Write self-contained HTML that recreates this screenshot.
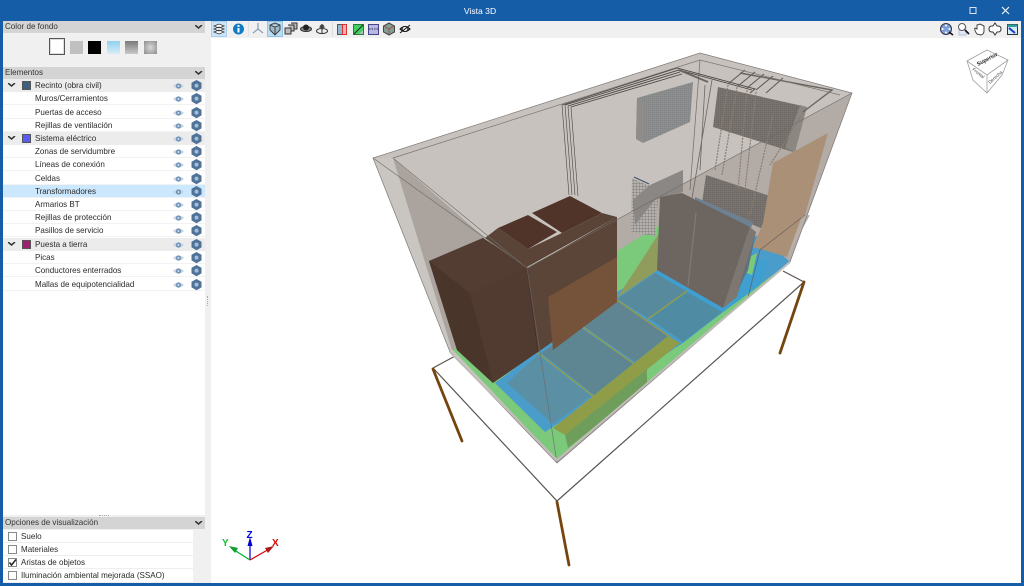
<!DOCTYPE html>
<html><head><meta charset="utf-8"><style>
html,body{margin:0;padding:0;width:1024px;height:586px;overflow:hidden;background:#165da8;font-family:"Liberation Sans",sans-serif;font-size:8.05px;color:#2a2a2a}
#w{position:absolute;left:0;top:0;width:1024px;height:586px;background:#165da8;filter:blur(.3px)}
.a{position:absolute}
.h{position:absolute;left:3px;width:202px;height:12px;background:#d4d4d4;line-height:11px;text-indent:2px;color:#333}
.h svg{position:absolute;right:2px;top:4px}
.r{position:absolute;left:3px;width:202px;height:13px;background:#fff;border-bottom:1px solid #f2f2f2;line-height:13px;box-sizing:border-box;text-indent:32px;white-space:nowrap}
.g{background:#ececec;border-bottom:0}
.sel{background:#cce8ff}
.r svg.e{position:absolute;left:170px;top:3px}
.r svg.x{position:absolute;left:187.500px;top:.5px}
.r svg.c{position:absolute;left:5px;top:4px}
.r i{position:absolute;left:19px;top:2px;width:9px;height:9px;border:.5px solid #555;box-sizing:border-box}
.o{position:absolute;left:3px;width:190px;height:13px;background:#fff;border-bottom:1px solid #eee;box-sizing:border-box;line-height:13px;text-indent:18px;white-space:nowrap}
.o b{position:absolute;left:5px;top:2px;width:7px;height:7px;border:1px solid #888;background:#fff}
.s{position:absolute;top:41px;width:13px;height:13px}
</style></head><body><div id="w">
<svg width="0" height="0" style="position:absolute"><defs>
<g id="eye"><path d="M0 4Q5.500 -1 11 4Q5.500 9 0 4Z" fill="#c3d3e5"/><circle cx="5.500" cy="4" r="2.600" fill="#7394b8"/><circle cx="5.500" cy="4" r="1" fill="#cfdeec"/></g>
<g id="gear"><path d="M5.500 0L10.500 2.800V8.400L5.500 11.200L.5 8.400V2.800Z" fill="#4f7298"/><circle cx="5.500" cy="5.600" r="2" fill="#a6bdd4"/></g>
<g id="chev"><path d="M0 0L3.500 3L7 0" fill="none" stroke="#333" stroke-width="1.500"/></g>
<pattern id="m" width="2" height="2" patternUnits="userSpaceOnUse"><rect width="2" height="2" fill="#8d8e8e"/><rect width="1" height="1" fill="#808182"/></pattern>
<pattern id="m2" width="2" height="2" patternUnits="userSpaceOnUse"><rect width="2" height="2" fill="#78736f"/><rect width="1" height="1" fill="#6c6763"/></pattern>
<pattern id="m3" width="3" height="3" patternUnits="userSpaceOnUse"><rect width="3" height="3" fill="#b5b1ad"/><path d="M0 0H3M0 0V3" stroke="#6f6c6a" stroke-width=".7"/></pattern>
</defs></svg>

<div class="a" style="left:0;top:0;width:1024px;height:20px;background:#165da8;color:#fff;text-align:center;line-height:22px;font-size:8.600px;text-indent:-64px">Vista 3D</div>
<svg class="a" style="left:960px;top:4px" width="60" height="14"><rect x="10" y="3.500" width="6" height="6" fill="none" stroke="#dbe6f2"/><path d="M42 3L49 10M49 3L42 10" stroke="#eef3f9" stroke-width="1.200"/></svg>

<div class="a" style="left:3px;top:21px;width:208px;height:562px;background:#f0f0f0"></div>
<div class="h" style="top:21px">Color de fondo<svg width="8" height="5"><use href="#chev"/></svg></div>
<div class="s" style="left:49px;top:38px;width:14px;height:15px;background:#fff;border:1.500px solid #555;outline:1px solid #ddd;outline-offset:-2px"></div>
<div class="s" style="left:70px;background:#c0c0c0"></div>
<div class="s" style="left:88px;background:#000"></div>
<div class="s" style="left:107px;background:linear-gradient(#8fd0ef,#d9ecf6)"></div>
<div class="s" style="left:125px;background:linear-gradient(#7a7a7a,#c8c8c8)"></div>
<div class="s" style="left:144px;background:radial-gradient(#d8d8d8,#8c8c8c)"></div>

<div class="h" style="top:67px">Elementos<svg width="8" height="5"><use href="#chev"/></svg></div>
<div class="a" style="left:3px;top:79px;width:202px;height:436px;background:#fff"></div>

<div class="r g" style="top:79px"><svg class="c" width="8" height="5"><use href="#chev"/></svg><i style="background:#3f5f7f"></i>Recinto (obra civil)<svg class="e" width="11" height="8"><use href="#eye"/></svg><svg class="x" width="11" height="12"><use href="#gear"/></svg></div>
<div class="r" style="top:92px">Muros/Cerramientos<svg class="e" width="11" height="8"><use href="#eye"/></svg><svg class="x" width="11" height="12"><use href="#gear"/></svg></div>
<div class="r" style="top:106px">Puertas de acceso<svg class="e" width="11" height="8"><use href="#eye"/></svg><svg class="x" width="11" height="12"><use href="#gear"/></svg></div>
<div class="r" style="top:119px">Rejillas de ventilación<svg class="e" width="11" height="8"><use href="#eye"/></svg><svg class="x" width="11" height="12"><use href="#gear"/></svg></div>
<div class="r g" style="top:132px"><svg class="c" width="8" height="5"><use href="#chev"/></svg><i style="background:#5a5af5"></i>Sistema eléctrico<svg class="e" width="11" height="8"><use href="#eye"/></svg><svg class="x" width="11" height="12"><use href="#gear"/></svg></div>
<div class="r" style="top:145px">Zonas de servidumbre<svg class="e" width="11" height="8"><use href="#eye"/></svg><svg class="x" width="11" height="12"><use href="#gear"/></svg></div>
<div class="r" style="top:158px">Líneas de conexión<svg class="e" width="11" height="8"><use href="#eye"/></svg><svg class="x" width="11" height="12"><use href="#gear"/></svg></div>
<div class="r" style="top:172px">Celdas<svg class="e" width="11" height="8"><use href="#eye"/></svg><svg class="x" width="11" height="12"><use href="#gear"/></svg></div>
<div class="r sel" style="top:185px">Transformadores<svg class="e" width="11" height="8"><use href="#eye"/></svg><svg class="x" width="11" height="12"><use href="#gear"/></svg></div>
<div class="r" style="top:198px">Armarios BT<svg class="e" width="11" height="8"><use href="#eye"/></svg><svg class="x" width="11" height="12"><use href="#gear"/></svg></div>
<div class="r" style="top:211px">Rejillas de protección<svg class="e" width="11" height="8"><use href="#eye"/></svg><svg class="x" width="11" height="12"><use href="#gear"/></svg></div>
<div class="r" style="top:224px">Pasillos de servicio<svg class="e" width="11" height="8"><use href="#eye"/></svg><svg class="x" width="11" height="12"><use href="#gear"/></svg></div>
<div class="r g" style="top:238px"><svg class="c" width="8" height="5"><use href="#chev"/></svg><i style="background:#a0206e"></i>Puesta a tierra<svg class="e" width="11" height="8"><use href="#eye"/></svg><svg class="x" width="11" height="12"><use href="#gear"/></svg></div>
<div class="r" style="top:251px">Picas<svg class="e" width="11" height="8"><use href="#eye"/></svg><svg class="x" width="11" height="12"><use href="#gear"/></svg></div>
<div class="r" style="top:264px">Conductores enterrados<svg class="e" width="11" height="8"><use href="#eye"/></svg><svg class="x" width="11" height="12"><use href="#gear"/></svg></div>
<div class="r" style="top:278px">Mallas de equipotencialidad<svg class="e" width="11" height="8"><use href="#eye"/></svg><svg class="x" width="11" height="12"><use href="#gear"/></svg></div>

<div class="a" style="left:99px;top:515px;width:10px;height:1px;border-top:1px dotted #aaa"></div>
<div class="a" style="left:207px;top:296px;width:1px;height:10px;border-left:1px dotted #aaa"></div>

<div class="h" style="top:517px">Opciones de visualización<svg width="8" height="5"><use href="#chev"/></svg></div>
<div class="o" style="top:530px"><b></b>Suelo</div>
<div class="o" style="top:543px"><b></b>Materiales</div>
<div class="o" style="top:556px"><b></b>Aristas de objetos<svg class="a" style="left:5px;top:2px" width="10" height="10"><path d="M1.500 4.500L3.500 7L8 1.500" fill="none" stroke="#222" stroke-width="1.500"/></svg></div>
<div class="o" style="top:569px;height:14px"><b></b>Iluminación ambiental mejorada (SSAO)</div>

<div class="a" style="left:211px;top:21px;width:810px;height:17px;background:#f0f0f0"></div>
<div class="a" style="left:211px;top:38px;width:810px;height:545px;background:#fff"></div>

<svg class="a" style="left:211px;top:21px" width="810" height="17">
<rect x=".5" y=".5" width="15" height="15" fill="#cce4f7" stroke="#a8d0ec"/>
<path d="M3 5L8 3L13 5L8 7ZM3 8L8 6L13 8L8 10ZM3 11L8 9L13 11L8 13Z" fill="#fff" stroke="#333" stroke-width=".8"/>
<circle cx="27.500" cy="8" r="5.500" fill="#0f7bc4"/><rect x="26.500" y="7" width="2" height="4.500" fill="#fff"/><rect x="26.500" y="4" width="2" height="2" fill="#fff"/>
<rect x="37" y="1" width="1" height="14" fill="#e2e2e2"/>
<path d="M47 8V2M47 8L42 12M47 8L52 12" stroke="#6f8daa" fill="none"/>
<rect x="56.500" y=".5" width="15" height="15" fill="#bcdcf2" stroke="#92c4e6"/>
<path d="M59 4L64 2L69 4V9L64 14L59 9ZM59 4L64 6L69 4M64 6V14" fill="#9fb8c8" stroke="#333" stroke-width=".9"/>
<path d="M74 7H80V13H74ZM77 4H83V10H80M80 2H86V8H83" fill="#bbb" stroke="#333"/>
<ellipse cx="95" cy="8" rx="5.500" ry="2.500" fill="#888" stroke="#333"/><circle cx="95" cy="6.500" r="3" fill="#222"/>
<ellipse cx="111" cy="10" rx="5.500" ry="2.500" fill="none" stroke="#333"/><circle cx="111" cy="6" r="2.500" fill="#555"/><path d="M111 3V13" stroke="#333"/>
<rect x="121" y="1" width="1" height="14" fill="#dcdcdc"/>
<rect x="126.500" y="3.500" width="5" height="10" fill="#8fb8d0" stroke="#555"/><rect x="131.500" y="3.500" width="4" height="10" fill="#f3b0b0" stroke="#e03030"/>
<rect x="142.500" y="3.500" width="10" height="10" fill="#40d060" stroke="#2a7a40"/><path d="M143 13L152 4" stroke="#222"/><path d="M148 13L152 9V13Z" fill="#bbb"/>
<rect x="157.500" y="3.500" width="10" height="10" fill="#b8b8e8" stroke="#444488"/><path d="M158 8H167" stroke="#333" stroke-dasharray="1.500 1"/>
<path d="M178 2L183.500 5V11L178 14L172.500 11V5Z" fill="#7fa090" stroke="#444"/><path d="M173 5L178 8L183 5M178 8V14" stroke="#a05050" fill="none"/>
<path d="M189 8Q194 3 199 8Q194 13 189 8Z" fill="#555" stroke="#111"/><circle cx="194" cy="8" r="2" fill="#fff"/><path d="M189 12L199 4" stroke="#111"/>
<circle cx="735" cy="8" r="5.500" fill="#7f9fd8" stroke="#334"/><circle cx="735" cy="4.500" r="1" fill="#fff"/><circle cx="735" cy="11.500" r="1" fill="#fff"/><circle cx="731.500" cy="8" r="1" fill="#fff"/><circle cx="738.500" cy="8" r="1" fill="#fff"/><path d="M738 11L742 14" stroke="#111" stroke-width="1.600"/>
<rect x="748" y="6" width="7" height="8" fill="#e4e8f6" stroke="#b8c0e0"/><circle cx="751" cy="6" r="3.500" fill="#fff" stroke="#555"/><path d="M754 9L758 13" stroke="#111" stroke-width="1.600"/>
<path d="M766 13Q763 9 764 7L766 8V4L768 3.500L769 3L771 4L773 5V10Q773 13 770 14Z" fill="#fff" stroke="#444"/>
<path d="M784 2L786 5H787Q790 5 790 8Q790 11 787 11H786L784 14L782 11H781Q778 11 778 8Q778 5 781 5H782Z" fill="#fff" stroke="#333"/>
<rect x="796.500" y="3.500" width="10" height="10" fill="#d8ecf8" stroke="#333"/><rect x="796.500" y="3.500" width="10" height="2.500" fill="#30a0a0"/><path d="M798 7L804 12" stroke="#1540c0" stroke-width="2"/>
</svg>

<svg class="a" style="left:0;top:0;filter:blur(.25px)" width="1024" height="586">
<!-- stand -->
<path d="M433 368L557 501L804 282L783 271M433 368L457 355" fill="none" stroke="#5a5450" stroke-width="1.200"/>
<path d="M433 369L462 441M557 502L569 565M804 282L780 353" stroke="#74450f" stroke-width="2.800" stroke-linecap="round"/>

<!-- box body -->
<path d="M373 158L700 53L852 93L790 262L557 463L450 352Z" fill="#c7c2be"/>
<path d="M527 268L852 93L790 262L557 463Z" fill="#a39b96" fill-opacity=".6"/>
<path d="M373 158L393 158L527 268L557 463L450 352Z" fill="#c9c5c1"/>
<path d="M393 158L485 238L429 261L457 350L452 350Z" fill="#aaa39e"/>

<!-- floor -->
<path d="M453 350L660 225L790 262L557 460Z" fill="#7bc97a"/>
<path d="M495 383L545 432L683 343L723 312L790 262L760 235L650 272L617 292Z" fill="#4a9ccb"/>
<path d="M684 340L723 312L760 285L768 262L720 250L655 273Z" fill="#3f9fd0"/>
<path d="M507 383L538 355L591 396L553 424Z" fill="#5b8fa3"/>
<path d="M541 353L580 327L633 364L594 395Z" fill="#5e8592"/>
<path d="M582 325L617 300L668 336L635 362Z" fill="#5f8592"/>
<path d="M617 299L655 273L686 291L648 318Z" fill="#578a9c"/>
<path d="M650 319L687 292L722 312L683 342Z" fill="#4f8ca3"/>
<path d="M538 353L593 396M580 325L634 364M617 300L670 337M648 319L687 291" stroke="#8e9a50" stroke-width="1.600" fill="none"/>
<path d="M553 428L565 435L680 343L668 336Z" fill="#8f9c48"/>
<path d="M617 298L660 232L700 240L655 272Z" fill="#8f9c5c"/>
<path d="M565 435L647 369L647 385L568 448Z" fill="#6f9d5c"/>
<path d="M730 267L757 253L752 275Z" fill="#7bc97a"/>

<!-- brown boxes -->
<path d="M429 261L483 238L527 266L538 352L493 383L457 350Z" fill="#513b30"/>
<path d="M429 261L470 293L493 383L457 350Z" fill="#4a352a"/>
<path d="M429 261L483 238L527 267L470 293Z" fill="#533d32"/>
<path d="M483 238L528 268L617 217V297L538 352L527 268Z" fill="#5b4538"/>
<path d="M485 238L498 228L528 249L562 233L602 213L617 217L527 267Z" fill="#5a4438"/>
<path d="M498 228L528 215L557 232L528 249Z" fill="#50342a"/>
<path d="M532 213L570 196L602 213L562 233Z" fill="#50342a"/>
<path d="M548 297L617 257V302L553 350Z" fill="#75533b"/>
<path d="M527 268L538 352" stroke="#3f3029" stroke-width=".8" fill="none"/>

<!-- grids -->
<path d="M637 98L693 82L690 122L643 143L636 139Z" fill="url(#m)"/>
<path d="M637 98L644 102L643 143L636 139Z" fill="#8f8c89"/>
<path d="M632 178L650 186L658 197L655 236L631 232Z" fill="url(#m3)"/>
<path d="M633 200L650 185L683 170L683 192L655 200L635 225Z" fill="#8a8785"/>
<path d="M634 177L649 184" stroke="#40536a" stroke-width="1.200"/>
<path d="M718 87L807 107L793 152L713 127Z" fill="url(#m2)"/>
<path d="M807 107L795 152L785 148L800 105Z" fill="#8d8782"/>
<path d="M706 175L782 200L777 235L702 203Z" fill="url(#m2)"/>
<path d="M762 223L782 200L776 235Z" fill="#856c56"/>
<path d="M828 133L773 163L763 223L753 247L787 257L805 215Z" fill="#ab9078"/>
<path d="M802 216L787 257L810 215Z" fill="#b8b0a8"/>

<!-- cabinets -->
<path d="M695 197L753 222L748 236L695 212Z" fill="#6f8090"/>
<path d="M660 197L682 193L750 227L723 308L657 270Z" fill="#6d6660"/>
<path d="M750 227L756 232L737 297L723 308Z" fill="#7d7671"/>
<path d="M696 213L688 286" stroke="#807a75" stroke-width="1.200"/>
<path d="M756 232L748 270L738 290Z" fill="#60707c"/>

<!-- cables -->
<path d="M562 105L677 68L755 89L750 93M565 105L679 70L752 90M568 106L680 72M571 107L682 74" fill="none" stroke="#4a4440" stroke-width=".9"/>
<path d="M562 105L569 195M565 105L572 195M568 106L575 195M571 107L578 196" fill="none" stroke="#4a4440" stroke-width=".6"/>
<path d="M679 70L708 82" stroke="#6b6560" stroke-width="2"/>
<path d="M728 84L745 70M738 86L755 72M747 88L764 74M756 90L773 76M766 93L783 78" stroke="#5f5a56" stroke-width="1.100" fill="none"/>
<path d="M740 73L832 90L803 112" stroke="#6b6560" stroke-width="1.400" fill="none"/>
<path d="M728 85L715 170M737 87L722 175M747 90L738 190M756 92L745 190M773 115L750 215M803 113L770 165" stroke="#8c7d72" stroke-width="1.200" stroke-dasharray="2 1" fill="none"/>
<path d="M712 80L690 210M705 85L700 170" stroke="#6d6662" stroke-width=".8" fill="none"/>

<!-- box edges -->
<path d="M373 158L700 53L852 93L527 268ZM393 158L700 60L840 95M393 158L527 268M373 158L450 352M852 93L790 262M527 268L557 463M450 352L557 463L790 262" fill="none" stroke="#6f6a66" stroke-width=".7" stroke-opacity=".85"/>
<path d="M700 60L690 190M805 215L760 250L748 297" fill="none" stroke="#5a5551" stroke-width=".7" stroke-opacity=".8"/>
<path d="M450 352L557 460L790 262" fill="none" stroke="#c0bcb8" stroke-width="2"/>

<!-- axes -->
<path d="M250 560L250 541" stroke="#0000d0" stroke-width="1.200"/><path d="M250 537L252.500 546H247.500Z" fill="#0000d0"/>
<path d="M250 560L271 548" stroke="#d80000" stroke-width="1.200"/><path d="M274 546L268 553L265 548Z" fill="#a81818"/>
<path d="M250 560L231 548" stroke="#00b030" stroke-width="1.200"/><path d="M229 546L238 548L235 553Z" fill="#10a030"/>
<text x="246.500" y="538" font-family="Liberation Sans" font-size="10" font-weight="bold" fill="#0000e0">Z</text>
<text x="272" y="546" font-family="Liberation Sans" font-size="10" font-weight="bold" fill="#e00000">X</text>
<text x="222" y="546" font-family="Liberation Sans" font-size="10" font-weight="bold" fill="#10c030">Y</text>

<!-- cube -->
<path d="M987 50L1008 60L1002 75L987 93L973 80L967 61ZM967 61L987 75L1008 60M987 75V93" fill="#fff" stroke="#a0a0a0" stroke-width=".8"/>
<text transform="translate(978 66) rotate(-28)" font-family="Liberation Sans" font-size="5.500" font-weight="bold" fill="#222">Superior</text>
<text transform="translate(972 70) rotate(38)" font-family="Liberation Sans" font-size="4.500" fill="#444">Frontal</text>
<text transform="translate(990 84) rotate(-42)" font-family="Liberation Sans" font-size="4.500" fill="#444">Derecha</text>
</svg>
</div></body></html>
